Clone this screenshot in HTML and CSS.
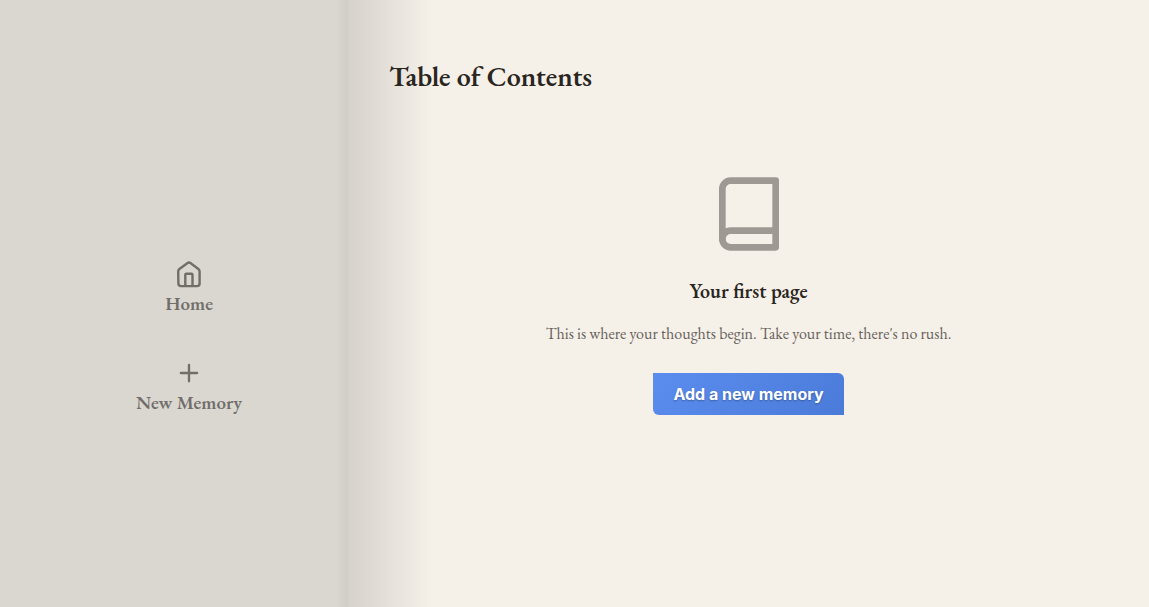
FILE: index.html
```html
<!DOCTYPE html>
<html lang="en">
  <head>
    <meta charset="UTF-8" />
    <meta name="viewport" content="width=device-width,initial-scale=1" />
    <title>Table of Contents</title>
    <link rel="stylesheet" href="styles.css">
  </head>
  <body>
    <nav class="sidebar">
      <a href="#home">
        <svg class="home" viewBox="0 0 28 28" aria-hidden="true">
          <path d="M3.200 11.500c0-1 .4-1.900 1.200-2.500l8.200-6a2.400 2.400 0 0 1 2.800 0l8 6c.8.6 1.200 1.500 1.200 2.500v12a2.600 2.600 0 0 1-2.600 2.600h-16a2.600 2.600 0 0 1-2.600-2.600z" />
          <path d="M10.300 25.800V14.800a1 1 0 0 1 1-1h5.200a1 1 0 0 1 1 1v11" />
        </svg>
        Home
      </a>
      <a href="#new">
        <svg viewBox="0 0 24 24" aria-hidden="true">
          <path d="M12 5v14M5 12h14" />
        </svg>
        New Memory
      </a>
    </nav>
    <main class="page">
      <h1>Table of Contents</h1>
      <div class="empty">
        <svg class="book" viewBox="0 0 24 24" aria-hidden="true">
          <path d="M4 19.5A2.5 2.5 0 0 1 6.5 17H20" />
          <path d="M6.5 2H20v20H6.5A2.5 2.5 0 0 1 4 19.5v-15A2.5 2.5 0 0 1 6.5 2z" />
        </svg>
        <h2>Your first page</h2>
        <p>This is where your thoughts begin. Take your time, there's no rush.</p>
        <button type="button">Add a new memory</button>
      </div>
    </main>
  </body>
</html>
```

FILE: styles.css
```css
* {
  --paper: #f5f0e8;
  --cover: #dad7d1;
  --ink: #292520;
  --muted: #716e6a;
  box-sizing: border-box;
}
body {
  margin: 0;
  min-height: 100vh;
  display: grid;
  grid-template-columns: 10fr 23fr;
  background: var(--paper);
  color: var(--ink);
  font-family: "EB Garamond", "Liberation Serif", serif;
}
svg {
  fill: none;
  stroke: currentColor;
  stroke-width: 2;
  stroke-linecap: round;
  stroke-linejoin: round;
}
.sidebar {
  display: flex;
  flex-direction: column;
  align-items: center;
  justify-content: center;
  gap: 43px;
  padding: 68px 0 0 30px;
  background: linear-gradient(to left, #cfcdc6, var(--cover) 12px);
}
.sidebar a {
  display: flex;
  flex-direction: column;
  align-items: center;
  gap: 4px;
  color: var(--muted);
  font-size: 19px;
  line-height: 24px;
  font-weight: 600;
  text-decoration: none;
}
.sidebar svg {
  width: 28px;
  height: 28px;
}
.sidebar .home {
  stroke-width: 2.4;
}
.page {
  padding: 56px 41px;
  background: linear-gradient(to right, #d6d2cb, var(--paper) 84px);
}
h1 {
  margin: 0;
  font-size: 28px;
  line-height: 40px;
  font-weight: 600;
}
.empty {
  display: flex;
  flex-direction: column;
  align-items: center;
  padding-top: 78px;
  text-align: center;
}
.book {
  width: 80px;
  height: 80px;
  color: #9e9a93;
}
h2 {
  margin: 24px 0 16px;
  font-size: 20px;
  line-height: 27px;
  font-weight: 600;
}
p {
  margin: 0 0 26px;
  color: #67625c;
  font-size: 16px;
  line-height: 26px;
}
button {
  padding: 10px 20px;
  border: 0;
  border-radius: 0 6px 0 6px;
  background: linear-gradient(135deg, #5b8def, #4a7bd9);
  color: #fff;
  font-family: Inter, "Liberation Sans", sans-serif;
  font-size: 16px;
  line-height: 22px;
  font-weight: 700;
  text-shadow: 0 1px 2px rgba(0, 0, 0, 0.3);
  cursor: pointer;
}
```
